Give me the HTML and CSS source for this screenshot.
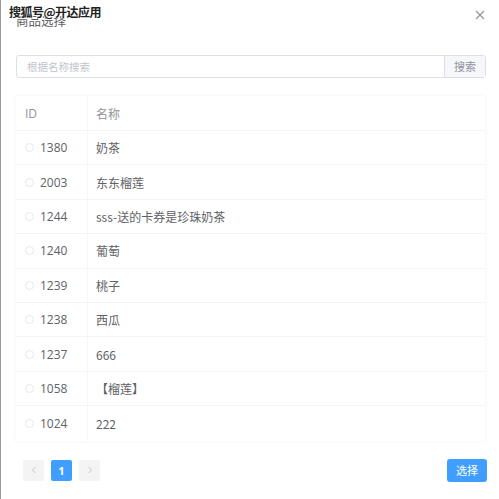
FILE: index.html
```html
<!DOCTYPE html>
<html lang="zh">
<head>
<meta charset="utf-8">
<link rel="stylesheet" href="styles.css">
</head>
<body>
<div class="dialog">
  <div class="watermark">搜狐号@开达应用</div>
  <div class="header">
    <span class="title">商品选择</span>
    <span class="close">
      <svg width="10" height="10" viewBox="0 0 10 10"><path d="M1 1L9 9M9 1L1 9" stroke="#909399" stroke-width="1.1" fill="none"/></svg>
    </span>
  </div>
  <div class="search">
    <div class="search-input">根据名称搜索</div>
    <div class="search-btn">搜索</div>
  </div>
  <div class="table">
    <div class="row head"><div class="c1">ID</div><div class="c2">名称</div></div>
    <div class="row"><div class="c1"><span class="radio"></span>1380</div><div class="c2">奶茶</div></div>
    <div class="row"><div class="c1"><span class="radio"></span>2003</div><div class="c2">东东榴莲</div></div>
    <div class="row"><div class="c1"><span class="radio"></span>1244</div><div class="c2">sss-送的卡券是珍珠奶茶</div></div>
    <div class="row"><div class="c1"><span class="radio"></span>1240</div><div class="c2">葡萄</div></div>
    <div class="row"><div class="c1"><span class="radio"></span>1239</div><div class="c2">桃子</div></div>
    <div class="row"><div class="c1"><span class="radio"></span>1238</div><div class="c2">西瓜</div></div>
    <div class="row"><div class="c1"><span class="radio"></span>1237</div><div class="c2">666</div></div>
    <div class="row"><div class="c1"><span class="radio"></span>1058</div><div class="c2">【榴莲】</div></div>
    <div class="row last"><div class="c1"><span class="radio"></span>1024</div><div class="c2">222</div></div>
  </div>
  <div class="footer">
    <div class="pager">
      <span class="pbtn"><svg width="8" height="8" viewBox="0 0 8 8"><path d="M5.5 1L2.5 4L5.5 7" stroke="#c0c4cc" stroke-width="1" fill="none"/></svg></span>
      <span class="pnum">1</span>
      <span class="pbtn"><svg width="8" height="8" viewBox="0 0 8 8"><path d="M2.5 1L5.5 4L2.5 7" stroke="#c0c4cc" stroke-width="1" fill="none"/></svg></span>
    </div>
    <div class="select-btn">选择</div>
  </div>
</div>
</body>
</html>
```
FILE: styles.css
```css
html, body {
  margin: 0;
  padding: 0;
  background: #fff;
}
body {
  font-family: "Noto Sans CJK SC", "Noto Sans", sans-serif;
  color: #606266;
  font-size: 12px;
}
.dialog {
  position: relative;
  width: 499px;
  height: 499px;
  box-sizing: border-box;
  border-left: 1px solid #9a9a9a;
  padding: 0 13px 0 14px;
}
.watermark {
  position: absolute;
  left: 8px;
  top: 4px;
  font-size: 12px;
  font-weight: bold;
  color: #222;
  line-height: 15px;
  text-shadow: 0 0 1px #fff, 1px 1px 0 #fff, -1px -1px 0 #fff;
  letter-spacing: -0.5px;
}
.header {
  display: flex;
  justify-content: space-between;
  align-items: center;
  height: 42px;
  padding: 0 1px 0 1px;
}
.title {
  font-size: 12.5px;
  color: #606266;
  line-height: 14px;
  margin-top: -1px;
}
.close {
  display: flex;
  margin-top: -12px;
}
.search {
  display: flex;
  margin-top: 13px;
  height: 23px;
  border: 1px solid #dcdfe6;
  border-radius: 3px;
  box-sizing: border-box;
  margin-left: 1px;
}
.search-input {
  flex: 1;
  padding-left: 10px;
  color: #c0c4cc;
  font-size: 10.5px;
  line-height: 21px;
}
.search-btn {
  width: 40px;
  background: #f5f7fa;
  border-left: 1px solid #dcdfe6;
  text-align: center;
  color: #909399;
  font-size: 11px;
  line-height: 21px;
}
.table {
  margin-top: 17px;
  width: 471px;
  box-shadow: 0 0 3px rgba(0,0,0,0.03);
  border: 1px solid #fafafa;
  box-sizing: border-box;
}
.row {
  display: flex;
  height: 34.4px;
  border-bottom: 1px solid #f4f4f4;
  box-sizing: border-box;
  align-items: center;
}
.row.head {
  height: 35px;
  color: #909399;
}
.row.last {
  border-bottom: none;
}
.c1 {
  width: 72px;
  height: 100%;
  display: flex;
  align-items: center;
  padding-left: 9px;
  box-sizing: border-box;
  border-right: 1px solid #f6f6f6;
  font-family: "Open Sans", "Noto Sans", sans-serif;
  font-size: 12px;
}
.c2 {
  padding-left: 8px;
  color: #606266;
}
.head .c2 { color: #909399; }
.radio {
  width: 9px;
  height: 9px;
  border: 1px solid #e4e7ed;
  border-radius: 50%;
  margin-right: 6px;
  box-sizing: border-box;
  display: inline-block;
}
.footer {
  display: flex;
  justify-content: space-between;
  align-items: center;
  margin-top: 17px;
  height: 23px;
}
.pager {
  display: flex;
  gap: 7px;
  margin-left: 8px;
}
.pbtn {
  width: 21px;
  height: 21px;
  background: #f4f4f5;
  border-radius: 2px;
  display: flex;
  align-items: center;
  justify-content: center;
}
.pnum {
  width: 21px;
  height: 21px;
  background: #409eff;
  color: #fff;
  border-radius: 2px;
  font-weight: bold;
  font-family: "Open Sans", sans-serif;
  font-size: 11px;
  display: flex;
  align-items: center;
  justify-content: center;
}
.select-btn {
  width: 40px;
  height: 23px;
  background: #409eff;
  color: #fff;
  border-radius: 3px;
  font-size: 11px;
  line-height: 23px;
  text-align: center;
  margin-right: -1px;
}
```
